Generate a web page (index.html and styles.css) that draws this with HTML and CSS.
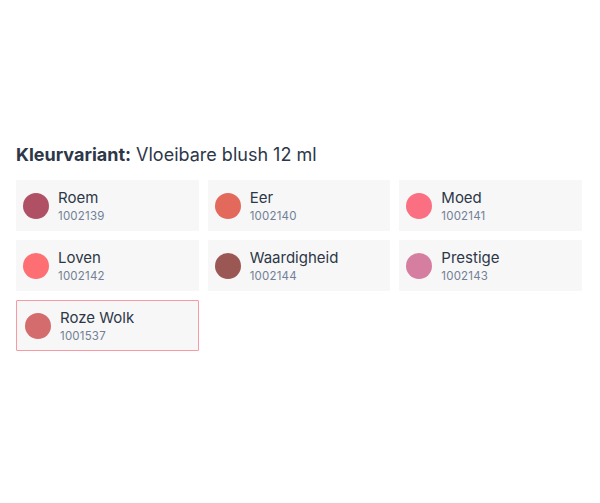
FILE: index.html
```html
<!DOCTYPE html>
<html lang="nl">
<head>
<meta charset="utf-8">
<link rel="stylesheet" href="styles.css">
</head>
<body>
<div class="wrap">
  <h2 class="title"><strong>Kleurvariant:</strong> Vloeibare blush 12 ml</h2>
  <div class="grid">
    <div class="card"><span class="dot" style="background:#b05064"></span><div class="info"><div class="name">Roem</div><div class="code">1002139</div></div></div>
    <div class="card"><span class="dot" style="background:#e2695b"></span><div class="info"><div class="name">Eer</div><div class="code">1002140</div></div></div>
    <div class="card"><span class="dot" style="background:#fa6f82"></span><div class="info"><div class="name">Moed</div><div class="code">1002141</div></div></div>
    <div class="card"><span class="dot" style="background:#fe6f74"></span><div class="info"><div class="name">Loven</div><div class="code">1002142</div></div></div>
    <div class="card"><span class="dot" style="background:#9b5754"></span><div class="info"><div class="name">Waardigheid</div><div class="code">1002144</div></div></div>
    <div class="card"><span class="dot" style="background:#d67e9f"></span><div class="info"><div class="name">Prestige</div><div class="code">1002143</div></div></div>
    <div class="card selected"><span class="dot" style="background:#d46c6d"></span><div class="info"><div class="name">Roze Wolk</div><div class="code">1001537</div></div></div>
  </div>
</div>
</body>
</html>
```
FILE: styles.css
```css
html, body {
  margin: 0;
  padding: 0;
  background: #fff;
}
body {
  font-family: Inter, "Noto Sans", sans-serif;
  color: #2d3748;
}
.wrap {
  padding: 141px 18px 0 16px;
}
.title {
  margin: 0 0 11px;
  font-size: 18px;
  line-height: 28px;
  font-weight: 400;
  color: #2d3748;
}
.title strong {
  font-weight: 700;
}
.grid {
  display: grid;
  grid-template-columns: repeat(3, 1fr);
  column-gap: 9px;
  row-gap: 9px;
}
.card {
  display: flex;
  align-items: center;
  gap: 9px;
  height: 51px;
  box-sizing: border-box;
  padding: 0 7px 0 6px;
  background: #f7f7f7;
  border: 1px solid transparent;
  border-radius: 1px;
}
.card.selected {
  border-color: #f79aa3;
  padding-left: 8px;
}
.dot {
  flex: 0 0 26px;
  width: 26px;
  height: 26px;
  border-radius: 50%;
}
.info {
  display: flex;
  flex-direction: column;
}
.name {
  font-size: 15px;
  line-height: 19px;
  color: #2d3748;
}
.code {
  font-size: 11.5px;
  line-height: 16px;
  color: #718096;
  letter-spacing: 0.2px;
  margin-top: 1px;
}
```
